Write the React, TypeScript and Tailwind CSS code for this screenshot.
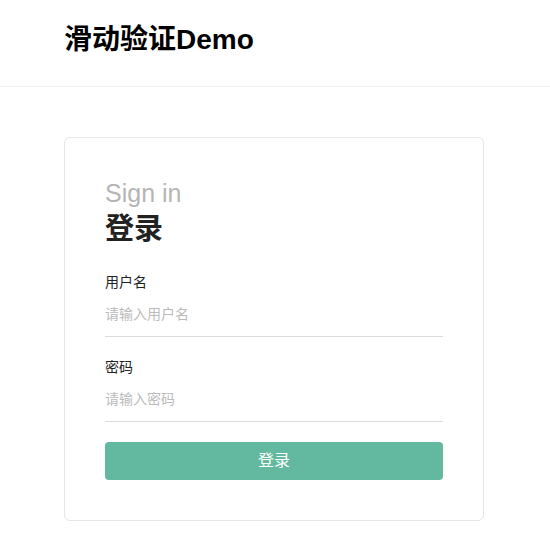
const font = { fontFamily: '"Liberation Sans", "Noto Sans CJK SC", sans-serif' };

function Field({ label, placeholder, type }: { label: string; placeholder: string; type: string }) {
  return (
    <div className="mb-5">
      <label className="block text-[14px] leading-5 text-[#222]">{label}</label>
      <input
        type={type}
        placeholder={placeholder}
        className="mt-3 block w-full border-b border-[#dcdcdc] pb-3 text-[14px] leading-5 outline-none placeholder:text-[#bbbbbb]"
      />
    </div>
  );
}

export default function App() {
  return (
    <div className="min-h-screen bg-white" style={font}>
      <header className="h-[87px] border-b border-[#eeeeee] px-[64px] pt-[20px]">
        <h1 className="text-[28px] font-bold leading-10 text-black">滑动验证Demo</h1>
      </header>

      <main className="px-[64px] pt-[50px]">
        <div className="w-[420px] rounded-md border border-[#e6e6e6] px-[40px] pt-[39px] pb-[40px]">
          <p className="text-[25px] leading-8 text-[#b5b5b5]">Sign in</p>
          <h2 className="mt-0.5 text-[29px] font-bold leading-9 text-[#222]">登录</h2>

          <form className="mt-[25px]" onSubmit={(e) => e.preventDefault()}>
            <Field label="用户名" placeholder="请输入用户名" type="text" />
            <Field label="密码" placeholder="请输入密码" type="password" />
            <button
              type="submit"
              className="block h-[38px] w-full rounded bg-[#63b9a0] text-[16px] text-white"
            >
              登录
            </button>
          </form>
        </div>
      </main>
    </div>
  );
}
